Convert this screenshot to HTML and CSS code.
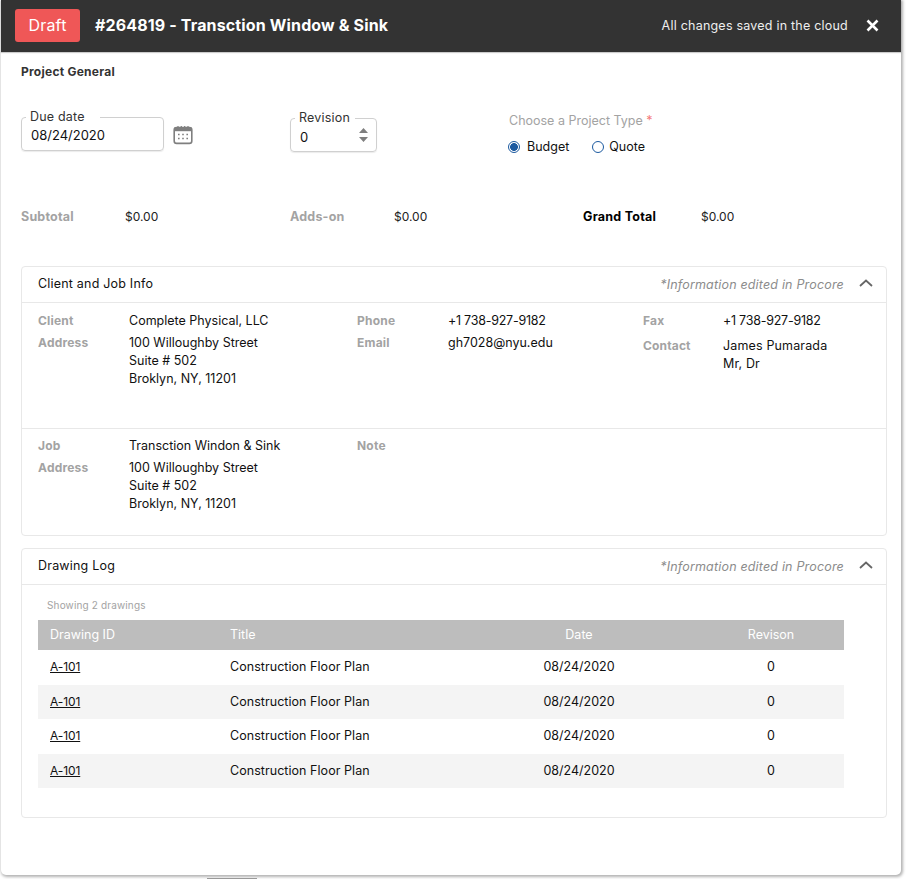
FILE: index.html
```html
<!DOCTYPE html>
<html lang="en">
<head>
<meta charset="utf-8">
<title>Project</title>
<link rel="stylesheet" href="styles.css">
</head>
<body>
<div class="modal">
  <header class="topbar">
    <div class="topbar-left">
      <span class="badge">Draft</span>
      <h1 class="title">#264819 - Transction Window &amp; Sink</h1>
    </div>
    <div class="topbar-right">
      <span class="saved">All changes saved in the cloud</span>
      <svg class="close" width="13" height="13" viewBox="0 0 13 13"><path d="M1.5 1.5l10 10M11.5 1.5l-10 10" stroke="#fff" stroke-width="2.6" fill="none"/></svg>
    </div>
  </header>

  <main class="content">
    <h2 class="section-title">Project General</h2>

    <div class="form-row">
      <div class="date-group">
        <fieldset class="field field-date">
          <legend>Due date</legend>
          <span class="field-value">08/24/2020</span>
        </fieldset>
        <svg class="calendar" width="20" height="20" viewBox="0 0 20 20">
          <rect x="1.2" y="2.6" width="17.6" height="15.8" rx="2.5" fill="none" stroke="#7f7f7f" stroke-width="1.6"/>
          <rect x="1.2" y="2.6" width="17.6" height="3.6" fill="#7f7f7f"/>
          <path d="M5 1v2M8.3 1v2M11.7 1v2M15 1v2" stroke="#7f7f7f" stroke-width="1.2"/>
          <path d="M5 9.5h1.6M9.2 9.5h1.6M13.4 9.5h1.6M5 13.5h1.6M9.2 13.5h1.6M13.4 13.5h1.6" stroke="#7f7f7f" stroke-width="1.6"/>
        </svg>
      </div>
      <fieldset class="field field-rev">
        <legend>Revision</legend>
        <span class="field-value">0</span>
        <svg class="spinner" width="9" height="14" viewBox="0 0 9 14"><path d="M4.5 0L9 5H0zM4.5 14L0 9h9z" fill="#7f7f7f"/></svg>
      </fieldset>
      <div class="type-group">
        <div class="type-label">Choose a Project Type <span class="req">*</span></div>
        <div class="radios">
          <span class="radio-item"><span class="radio radio-on"></span>Budget</span>
          <span class="radio-item"><span class="radio"></span>Quote</span>
        </div>
      </div>
    </div>

    <div class="totals">
      <div class="total total-1"><span class="muted-label">Subtotal</span><span class="total-val">$0.00</span></div>
      <div class="total total-2"><span class="muted-label">Adds-on</span><span class="total-val">$0.00</span></div>
      <div class="total total-3"><span class="grand">Grand Total</span><span class="total-val">$0.00</span></div>
    </div>

    <section class="card card-info">
      <div class="card-head">
        <span class="card-title">Client and Job Info</span>
        <span class="card-note">*Information edited in Procore</span>
        <svg class="chev" width="14" height="8" viewBox="0 0 14 8"><path d="M1 7l6-5.5L13 7" stroke="#666" stroke-width="1.8" fill="none"/></svg>
      </div>
      <div class="info-block info-client">
        <dl class="info-col col-a">
          <dt>Client</dt><dd>Complete Physical, LLC</dd>
          <dt class="row-2">Address</dt><dd class="row-2">100 Willoughby Street<br>Suite # 502<br>Broklyn, NY, 11201</dd>
        </dl>
        <dl class="info-col col-b">
          <dt>Phone</dt><dd class="phone">+1 738-927-9182</dd>
          <dt class="row-2">Email</dt><dd class="row-2">gh7028@nyu.edu</dd>
        </dl>
        <dl class="info-col col-c">
          <dt>Fax</dt><dd class="phone">+1 738-927-9182</dd>
          <dt class="row-contact">Contact</dt><dd class="row-contact">James Pumarada<br>Mr, Dr</dd>
        </dl>
      </div>
      <div class="info-block info-job">
        <dl class="info-col col-a">
          <dt>Job</dt><dd>Transction Windon &amp; Sink</dd>
          <dt class="row-2">Address</dt><dd class="row-2">100 Willoughby Street<br>Suite # 502<br>Broklyn, NY, 11201</dd>
        </dl>
        <dl class="info-col col-b">
          <dt>Note</dt><dd></dd>
        </dl>
      </div>
    </section>

    <section class="card card-log">
      <div class="card-head">
        <span class="card-title">Drawing Log</span>
        <span class="card-note">*Information edited in Procore</span>
        <svg class="chev" width="14" height="8" viewBox="0 0 14 8"><path d="M1 7l6-5.5L13 7" stroke="#666" stroke-width="1.8" fill="none"/></svg>
      </div>
      <div class="log-body">
        <div class="showing">Showing 2 drawings</div>
        <table class="log">
          <thead>
            <tr><th class="c-id">Drawing ID</th><th class="c-title">Title</th><th class="c-date">Date</th><th class="c-rev">Revison</th></tr>
          </thead>
          <tbody>
            <tr><td><a href="#">A-101</a></td><td>Construction Floor Plan</td><td class="ctr">08/24/2020</td><td class="ctr">0</td></tr>
            <tr><td><a href="#">A-101</a></td><td>Construction Floor Plan</td><td class="ctr">08/24/2020</td><td class="ctr">0</td></tr>
            <tr><td><a href="#">A-101</a></td><td>Construction Floor Plan</td><td class="ctr">08/24/2020</td><td class="ctr">0</td></tr>
            <tr><td><a href="#">A-101</a></td><td>Construction Floor Plan</td><td class="ctr">08/24/2020</td><td class="ctr">0</td></tr>
          </tbody>
        </table>
      </div>
    </section>
  </main>
</div>
<div class="peek"></div>
</body>
</html>
```

FILE: styles.css
```css
* { box-sizing: border-box; }
html, body { margin: 0; padding: 0; }
body {
  width: 906px;
  height: 879px;
  overflow: hidden;
  background: #fff;
  font-family: "Inter", "Open Sans", sans-serif;
  font-size: 12.5px;
  color: #111;
  position: relative;
}
.modal {
  margin-left: 1px;
  width: 900px;
  height: 875px;
  background: #fff;
  border-radius: 0 0 5px 5px;
  box-shadow: 1px 1px 3px 1px rgba(0,0,0,.3);
}
.topbar {
  height: 52px;
  background: #333;
  display: flex;
  align-items: center;
  justify-content: space-between;
  padding: 0 22px 2px 14px;
  box-shadow: 0 1px 1px rgba(0,0,0,.2);
}
.topbar-left { display: flex; align-items: center; gap: 15px; }
.badge {
  width: 65px;
  height: 33px;
  background: #ef5757;
  color: #fff;
  border-radius: 3px;
  font-size: 16px;
  letter-spacing: .2px;
  display: flex;
  align-items: center;
  justify-content: center;
}
.title { margin: 0; color: #fff; font-size: 16px; font-weight: 700; letter-spacing: .14px; }
.topbar-right { display: flex; align-items: center; gap: 18px; }
.saved { color: #eee; font-size: 12.5px; letter-spacing: .22px; }
.close { display: block; }
.content { padding: 0 13px 0 20px; }
.section-title { margin: 0; padding-top: 12px; height: 40px; font-size: 12px; font-weight: 700; color: #333; line-height: 16px; letter-spacing: .25px; }
.form-row { display: flex; height: 114px; padding-top: 18px; }
.date-group { width: 269px; display: flex; align-items: flex-start; gap: 9px; }
.field {
  margin: 0;
  border: 1px solid #d0d0d0;
  border-radius: 4px;
  padding: 0 9px;
  position: relative;
  box-shadow: 0 1px 1px rgba(0,0,0,.08);
}
.field legend { font-size: 12.5px; color: #333; padding: 0 5px 0 4px; margin-left: -5px; line-height: 14px; letter-spacing: .2px; }
.field-date { width: 143px; height: 41px; }
.field-date legend { padding-right: 15px; }
.field-rev { width: 87px; height: 41px; margin-top: 1px; }
.field-value { display: block; font-size: 13px; line-height: 18px; padding-top: 2px; }
.field-rev .field-value { padding-top: 3px; }
.calendar { margin-top: 15px; }
.spinner { position: absolute; right: 8px; top: 3px; }
.type-group { margin-left: 132px; padding-top: 2px; }
.type-label { color: #a3a3a3; font-size: 12.5px; line-height: 16px; margin-top: 1px; }
.req { color: #f47a7a; }
.radios { display: flex; gap: 23px; margin-top: 10px; margin-left: -1px; font-size: 12.5px; line-height: 16px; }
.radio-item { display: flex; align-items: center; gap: 7px; }
.radio-item + .radio-item { gap: 5px; }
.radio { width: 12px; height: 12px; border: 1px solid #1c5aa0; border-radius: 50%; display: block; }
.radio-on { background: radial-gradient(circle, #1c5aa0 0 3.6px, #fff 4.2px); }
.totals { display: flex; height: 60px; font-size: 12.5px; line-height: 16px; padding-top: 3px; }
.total { display: flex; }
.total-1 { width: 269px; }
.total-2 { width: 293px; }
.muted-label { color: #a3a3a3; font-weight: 700; width: 104px; letter-spacing: .2px; }
.grand { color: #000; font-weight: 700; width: 118px; letter-spacing: .25px; }
.total-val { color: #222; font-size: 12px; }
.card {
  width: 866px;
  border: 1px solid #e8e8e8;
  border-radius: 4px;
  margin-bottom: 12px;
}
.card-info { height: 270px; }
.card-log { height: 270px; }
.card-head {
  height: 36px;
  display: flex;
  align-items: center;
  padding: 0 13px 0 16px;
  border-bottom: 1px solid #e8e8e8;
}
.card-title { font-size: 12.5px; color: #111; font-weight: 400; margin-top: -2px; letter-spacing: .2px; }
.card-note { margin-left: auto; color: #8c8c8c; font-style: italic; font-size: 12.5px; letter-spacing: .18px; }
.chev { margin-left: 15px; margin-top: -3px; }
.info-block { display: flex; padding: 8px 16px 0; }
.info-client { height: 126px; padding-top: 9px; border-bottom: 1px solid #e8e8e8; }
.info-col {
  margin: 0;
  display: grid;
  align-content: start;
  line-height: 18px;
}
.info-col dt { color: #a3a3a3; font-weight: 700; font-size: 12px; letter-spacing: .2px; }
.info-col dd { margin: 0; font-size: 12.5px; }
.info-col dd.phone { letter-spacing: -.25px; }
.info-col .row-2 { margin-top: 4px; }
.info-col .row-contact { margin-top: 7px; letter-spacing: .15px; }
.col-a { width: 319px; grid-template-columns: 91px 1fr; }
.col-b { width: 286px; grid-template-columns: 91px 1fr; }
.col-c { grid-template-columns: 80px 1fr; }
.log-body { padding: 13px 0 0 16px; }
.showing { padding-left: 9px; color: #a3a3a3; font-size: 10px; line-height: 14px; height: 22px; letter-spacing: .15px; }
.log { width: 806px; border-collapse: collapse; table-layout: fixed; font-size: 12.5px; }
.log th { height: 30px; background: #bdbdbd; color: #fff; font-weight: 400; padding: 0 0 1px; text-align: center; }
.log td { height: 34.6px; padding: 0 0 1px; }
.log tbody tr:nth-child(even) td { background: #f4f4f4; }
.log th.c-id { width: 180px; text-align: left; padding-left: 12px; }
.log th.c-title { width: 242px; text-align: left; padding-left: 12px; }
.log th.c-date { width: 238px; }
.log th.c-rev { width: 146px; }
.log td:nth-child(1), .log td:nth-child(2) { padding-left: 12px; }
.log td:nth-child(2) { letter-spacing: .05px; }
.log td.ctr { text-align: center; }
.log a { color: #111; font-size: 12px; letter-spacing: -.1px; }
.peek { position: absolute; left: 207px; top: 878px; width: 50px; height: 1px; background: #999; }
```
